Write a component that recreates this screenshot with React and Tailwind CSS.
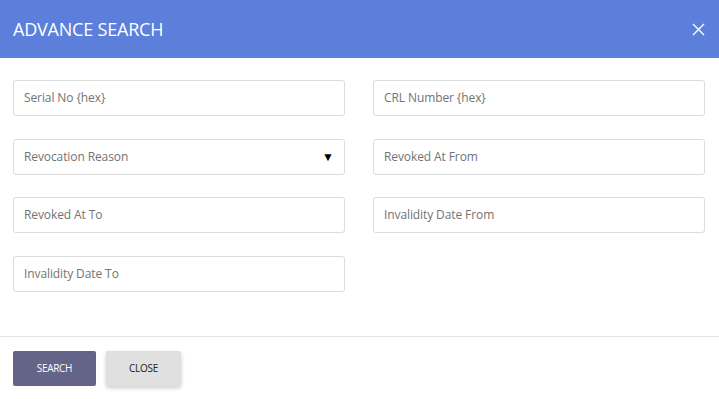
import React from "react";

const font = { fontFamily: '"Open Sans", "Noto Sans", sans-serif' };

function Field({ label, select }) {
  return (
    <div className="h-[36px] border border-[#dcdcdc] rounded-[3px] bg-white flex items-center justify-between pl-[10px] pr-[10px]">
      <span className="text-[12px] text-[#737373] tracking-[-0.1px]">{label}</span>
      {select && <span className="text-[12px] text-black leading-none">▼</span>}
    </div>
  );
}

export default function App() {
  return (
    <div className="w-[719px] h-[399px] bg-white flex flex-col" style={font}>
      <div className="h-[58px] bg-[#5b7fdb] flex items-center justify-between pl-[13px] pr-[14px]">
        <span className="text-white text-[18px] tracking-[-0.2px]">ADVANCE SEARCH</span>
        <svg width="13" height="13" viewBox="0 0 13 13" className="mt-[1px]">
          <path d="M1 1 L12 12 M12 1 L1 12" stroke="white" strokeWidth="1.4" />
        </svg>
      </div>
      <div className="grid grid-cols-2 gap-x-[28px] gap-y-[22.5px] pl-[13px] pr-[14px] pt-[22px] h-[278px] content-start">
        <Field label="Serial No {hex}" />
        <Field label="CRL Number {hex}" />
        <Field label="Revocation Reason" select />
        <Field label="Revoked At From" />
        <Field label="Revoked At To" />
        <Field label="Invalidity Date From" />
        <Field label="Invalidity Date To" />
      </div>
      <div className="border-t border-[#e3e3e3] flex gap-[10px] pl-[13px] pt-[14px]">
        <button className="w-[83px] h-[35px] bg-[#646488] text-white text-[10px] rounded-[2px] tracking-[-0.3px]">SEARCH</button>
        <button className="w-[75px] h-[35px] bg-[#e0e0e0] text-[#222] text-[10px] rounded-[2px] shadow-[0_2px_4px_rgba(0,0,0,0.2)] tracking-[-0.3px]">CLOSE</button>
      </div>
    </div>
  );
}
